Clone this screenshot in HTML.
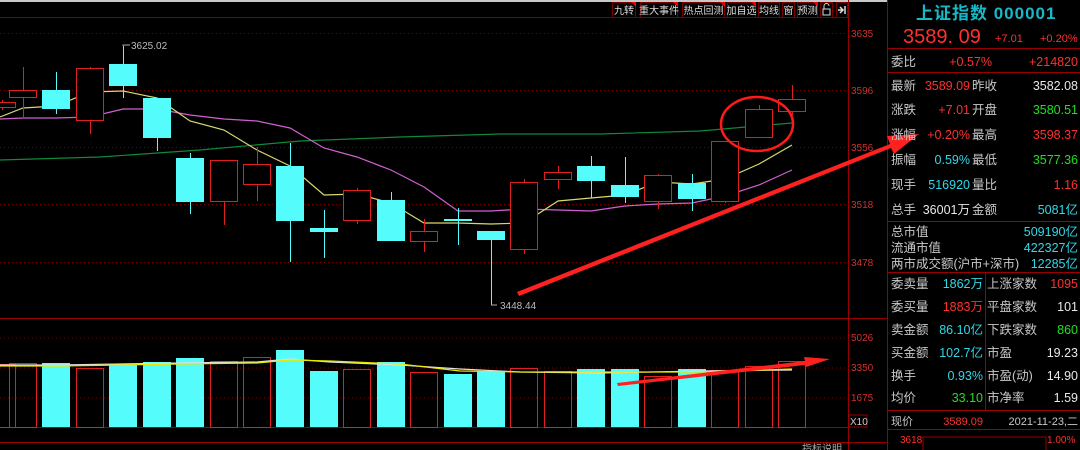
<!DOCTYPE html>
<html><head><meta charset="utf-8">
<style>
html,body{margin:0;padding:0;background:#000;width:1080px;height:450px;overflow:hidden}
svg{display:block}
text{font-family:"Liberation Sans","Noto Sans CJK SC",sans-serif}
.cn{font-family:"Liberation Sans","Noto Sans CJK SC",sans-serif}
</style></head><body>
<svg id="s" width="1080" height="450" viewBox="0 0 1080 450" xmlns="http://www.w3.org/2000/svg">
<rect width="1080" height="450" fill="#000"/>
<rect x="0" y="0" width="888" height="2" fill="#c8c8c8"/>
<line x1="0" y1="17.5" x2="848" y2="17.5" stroke="#800000"/>
<g id="grid" stroke="#7a0000" stroke-dasharray="1,3"></g>
<line x1="848.5" y1="0" x2="848.5" y2="450" stroke="#900"/>
<line x1="887.5" y1="0" x2="887.5" y2="450" stroke="#900"/>
<line x1="0" y1="318.5" x2="888" y2="318.5" stroke="#900"/>
<line x1="0" y1="427.5" x2="848" y2="427.5" stroke="#900"/>
<line x1="0" y1="442.5" x2="888" y2="442.5" stroke="#900"/>
<g font-size="10" fill="#d03030">
<text x="851" y="37">3635</text><text x="851" y="94">3596</text><text x="851" y="151">3556</text><text x="851" y="208">3518</text><text x="851" y="266">3478</text>
<text x="851" y="341">5026</text><text x="851" y="371">3350</text><text x="851" y="401">1675</text>
</g>
<rect x="849" y="415" width="18" height="12" fill="none" stroke="#900"/>
<text x="850" y="425" font-size="10" fill="#ccc">X10</text>
<text x="802" y="452" font-size="10" fill="#aaa" class="cn">指标说明</text>
<g id="tb"></g>
<g id="ma"></g>
<g id="cd"></g>
<g id="vol"></g>
<g stroke="#aaa" fill="none"><polyline points="123,46 123,45 130,45"/><polyline points="491,305 497,305"/></g>
<text x="131" y="49" font-size="10" fill="#bbb">3625.02</text>
<text x="500" y="309" font-size="10" fill="#bbb">3448.44</text>
<ellipse cx="757" cy="124" rx="36" ry="27" fill="none" stroke="#ff1a1a" stroke-width="2.5"/>
<polygon points="517,292 890,144 887,136 919,134 894,154 891,148 519,296" fill="#ff2020"/>
<polygon points="617,383 805,361 804,357 830,359 806,367 805,365 618,386" fill="#ff2020"/>
<g class="cn">
<text x="916" y="19" font-size="17" fill="#18b8c8" font-weight="bold" letter-spacing="1">上证指数 000001</text>
<text x="903" y="43" font-size="20" fill="#ff3030">3589. 09</text>
<text x="995" y="42" font-size="11" fill="#ff3030">+7.01</text>
<text x="1040" y="42" font-size="11" fill="#ff3030">+0.20%</text>
<line x1="888" y1="48.5" x2="1080" y2="48.5" stroke="#900"/>
<line x1="888" y1="72.5" x2="1080" y2="72.5" stroke="#900"/>
<line x1="888" y1="221.5" x2="1080" y2="221.5" stroke="#900"/>
<line x1="888" y1="272.5" x2="1080" y2="272.5" stroke="#900"/>
<line x1="888" y1="410.5" x2="1080" y2="410.5" stroke="#900"/>
<line x1="888" y1="429.5" x2="1080" y2="429.5" stroke="#900"/>
<line x1="985.5" y1="272" x2="985.5" y2="410" stroke="#900"/>
<g id="rp" font-size="12.5"></g>
</g>
</svg>
<script>
var NS="http://www.w3.org/2000/svg";
function el(p,t,a,txt){var e=document.createElementNS(NS,t);for(var k in a)e.setAttribute(k,a[k]);if(txt!=null)e.textContent=txt;document.getElementById(p).appendChild(e);return e;}
[33,90,147,204,262,337.5,367.5,397.5].forEach(function(y){el("grid","line",{x1:0,y1:y+.5,x2:848,y2:y+.5});});
var tb=[["九转",612,636],["重大事件",640,678],["热点回测",682,725],["加自选",727,756],["均线",758,780],["窗",782,795],["预测",797,818],["",820,833],["",836,848]];
tb.forEach(function(b){el("tb","rect",{x:b[1]+.5,y:2.5,width:b[2]-b[1]-1,height:15,fill:"#000",stroke:"#7a0000"});
if(b[0])el("tb","text",{x:(b[1]+b[2])/2,y:14,"font-size":10,fill:"#ddd","text-anchor":"middle"},b[0]);
if(b[0]&&b[0]!="窗"&&b[0]!="均线")el("tb","polygon",{points:(b[2]-5)+",2 "+b[2]+",2 "+b[2]+",7",fill:"#e00"});});
el("tb","rect",{x:823,y:9,width:7,height:6,fill:"none",stroke:"#ddd"});
el("tb","path",{d:"M824,9 V6 a2.5,2.5 0 0 1 5,0",fill:"none",stroke:"#ddd"});
el("tb","path",{d:"M838,10 h4 M840,7 l3,3 l-3,3 M845,6 v8",stroke:"#ddd",fill:"none","stroke-width":1.5});
var C=[[2,1,102,107,100,110],[23,1,90,97,67,117],[56,0,90,109,72,114],[90,1,68,120,67,134],[123,0,64,86,46,98],[157,0,98,138,98,151],[190,0,158,202,153,214],[224,1,160,201,160,225],[257,1,164,184,147,201],[290,0,166,221,143,262],[324,0,228,232,210,258],[357,1,190,220,188,224],[391,0,200,241,192,241],[424,1,231,241,219,252],[458,0,219,220,208,245],[491,0,231,240,231,305],[524,1,182,249,179,254],[558,1,172,179,166,189],[591,0,166,181,156,198],[625,0,185,197,157,203],[658,1,175,201,174,209],[692,0,183,199,174,211],[725,1,141,201,141,203],[759,1,109,137,105,137],[792,1,99,111,85,115]];
C.forEach(function(c){var x=c[0],col=c[1]?"#e02020":"#54fcfc";
el("cd","line",{x1:x+.5,y1:c[4],x2:x+.5,y2:c[2],stroke:col});el("cd","line",{x1:x+.5,y1:c[3],x2:x+.5,y2:c[5],stroke:col});
if(c[1])el("cd","rect",{x:x-13.5,y:c[2]+.5,width:27,height:c[3]-c[2],fill:"#000",stroke:col});
else el("cd","rect",{x:x-14,y:c[2],width:28,height:Math.max(2,c[3]-c[2]),fill:col});});
function pl(p,pts,col){el(p,"polyline",{points:pts,fill:"none",stroke:col,"stroke-width":1.2});}
pl("ma","0,160 100,157 200,150 300,141 400,137 500,134 600,134 700,131 792,123","#0e8a3a");
pl("ma","0,119 23,118 56,118 90,117 123,109 157,109 190,115 224,119 257,121 290,128 324,148 357,157 391,170 424,187 458,211 491,211 524,209 558,210 591,211 625,206 658,204 692,203 725,196 759,185 792,170","#d060d0");
pl("ma","0,117 23,108 56,106 90,92 123,91 157,98 190,121 224,130 257,150 290,166 324,195 357,194 391,203 424,223 458,223 491,224 524,223 558,201 591,198 625,195 658,182 692,184 725,179 759,164 792,145","#d8d870");
var V=[[2,1,364],[23,1,363],[56,0,363],[90,1,368],[123,0,365],[157,0,362],[190,0,358],[224,1,361],[257,1,357],[290,0,350],[324,0,371],[357,1,369],[391,0,362],[424,1,372],[458,0,374],[491,0,371],[524,1,368],[558,1,371],[591,0,369],[625,0,369],[658,1,376],[692,0,369],[725,1,370],[759,1,366],[792,1,361]];
V.forEach(function(v){var col=v[1]?"#e02020":"#54fcfc";
if(v[1])el("vol","rect",{x:v[0]-13.5,y:v[2]+.5,width:27,height:427-v[2],fill:"none",stroke:col});
else el("vol","rect",{x:v[0]-14,y:v[2],width:28,height:427-v[2],fill:col});});
pl("vol","0,365 60,365 120,364 180,363 257,362 290,359 330,362 400,365 460,369 520,372 600,373 700,371 792,370","#e0e0e0");
pl("vol","0,366 60,366 120,365 180,364 257,363 290,360 330,361 400,364 460,371 520,372 600,372 700,372 792,369","#e8e800");
var G="#c8c8c8",R="#ff3030",Cy="#30d8e8",Gr="#20e020",W="#e8e8e8";
function row(y,l1,v1,c1,l2,v2,c2){el("rp","text",{x:891,y:y,fill:G},l1);if(v1)el("rp","text",{x:970,y:y,fill:c1,"text-anchor":"end"},v1);
if(l2)el("rp","text",{x:972,y:y,fill:G},l2);if(v2)el("rp","text",{x:1078,y:y,fill:c2,"text-anchor":"end"},v2);}
row(66,"委比","+0.57%",R,"","+214820",R);
document.querySelector("#rp text:nth-child(2)").setAttribute("x","992");
row(90,"最新","3589.09",R,"昨收","3582.08",W);
row(114,"涨跌","+7.01",R,"开盘","3580.51",Gr);
row(139,"涨幅","+0.20%",R,"最高","3598.37",R);
row(164,"振幅","0.59%",Cy,"最低","3577.36",Gr);
row(189,"现手","516920",Cy,"量比","1.16",R);
row(214,"总手","36001万",W,"金额","5081亿",Cy);
row(236,"总市值","","", "","509190亿",Cy);
row(252,"流通市值","","","","422327亿",Cy);
row(268,"两市成交额(沪市+深市)","","","","12285亿",Cy);
function row2(y,l1,v1,c1,l2,v2,c2){el("rp","text",{x:891,y:y,fill:G},l1);el("rp","text",{x:983,y:y,fill:c1,"text-anchor":"end"},v1);
el("rp","text",{x:987,y:y,fill:G},l2);el("rp","text",{x:1078,y:y,fill:c2,"text-anchor":"end"},v2);}
row2(288,"委卖量","1862万",Cy,"上涨家数","1095",R);
row2(311,"委买量","1883万",R,"平盘家数","101",W);
row2(334,"卖金额","86.10亿",Cy,"下跌家数","860",Gr);
row2(357,"买金额","102.7亿",Cy,"市盈","19.23",W);
row2(380,"换手","0.93%",Cy,"市盈(动)","14.90",W);
row2(402,"均价","33.10",Gr,"市净率","1.59",W);
el("rp","text",{x:891,y:425,fill:G,"font-size":11},"现价");
el("rp","text",{x:983,y:425,fill:R,"text-anchor":"end","font-size":11},"3589.09");
el("rp","text",{x:1078,y:425,fill:G,"text-anchor":"end","font-size":11},"2021-11-23,二");
el("rp","text",{x:900,y:443,fill:R,"font-size":10},"3618");
el("rp","text",{x:1047,y:443,fill:R,"font-size":10},"1.00%");
el("rp","polyline",{points:"923,450 923,437 1046,437 1046,450",fill:"none",stroke:"#900"});
</script>
</body></html>
